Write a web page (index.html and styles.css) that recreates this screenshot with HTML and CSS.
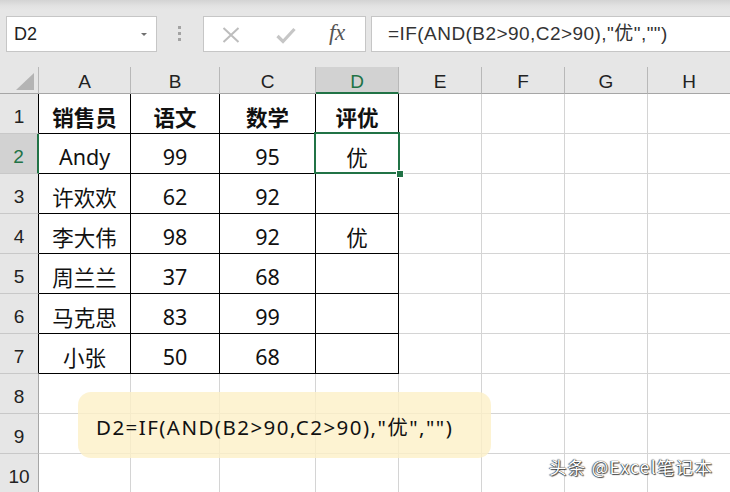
FILE: index.html
```html
<!DOCTYPE html>
<html lang="zh">
<head>
<meta charset="utf-8">
<title>Excel</title>
<link rel="stylesheet" href="styles.css">
</head>
<body>
<div class="app">
  <div class="toolbar">
    <div class="namebox">
      <span class="namebox-text">D2</span>
      <span class="namebox-arrow"></span>
    </div>
    <div class="grip"><i></i><i></i><i></i></div>
    <div class="fbtns">
      <svg class="ico-x" width="18" height="16" viewBox="0 0 18 16"><path d="M1.5 1 L16.5 15 M16.5 1 L1.5 15" stroke="#bdbdbd" stroke-width="2" fill="none"/></svg>
      <svg class="ico-check" width="20" height="17" viewBox="0 0 20 17"><path d="M1.5 9 L7 14.5 L18.5 2" stroke="#c6c6c6" stroke-width="3.2" fill="none"/></svg>
      <span class="ico-fx">fx</span>
    </div>
    <div class="formula">=IF(AND(B2&gt;90,C2&gt;90),"优","")</div>
  </div>

  <div class="sheet">
    <div class="grid">
      <div class="corner"><span class="tri"></span></div>
      <div class="ch">A</div><div class="ch">B</div><div class="ch">C</div><div class="ch sel">D</div><div class="ch">E</div><div class="ch">F</div><div class="ch">G</div><div class="ch">H</div>

      <div class="rh tb">1</div>
      <div class="c t b">销售员</div><div class="c t b">语文</div><div class="c t b">数学</div><div class="c t b">评优</div><div class="c"></div><div class="c"></div><div class="c"></div><div class="c"></div>

      <div class="rh sel">2</div>
      <div class="c t">Andy</div><div class="c t">99</div><div class="c t">95</div><div class="c t">优</div><div class="c"></div><div class="c"></div><div class="c"></div><div class="c"></div>

      <div class="rh tb">3</div>
      <div class="c t">许欢欢</div><div class="c t">62</div><div class="c t">92</div><div class="c t"></div><div class="c"></div><div class="c"></div><div class="c"></div><div class="c"></div>

      <div class="rh tb">4</div>
      <div class="c t">李大伟</div><div class="c t">98</div><div class="c t">92</div><div class="c t">优</div><div class="c"></div><div class="c"></div><div class="c"></div><div class="c"></div>

      <div class="rh tb">5</div>
      <div class="c t">周兰兰</div><div class="c t">37</div><div class="c t">68</div><div class="c t"></div><div class="c"></div><div class="c"></div><div class="c"></div><div class="c"></div>

      <div class="rh tb">6</div>
      <div class="c t">马克思</div><div class="c t">83</div><div class="c t">99</div><div class="c t"></div><div class="c"></div><div class="c"></div><div class="c"></div><div class="c"></div>

      <div class="rh tb">7</div>
      <div class="c t">小张</div><div class="c t">50</div><div class="c t">68</div><div class="c t"></div><div class="c"></div><div class="c"></div><div class="c"></div><div class="c"></div>

      <div class="rh">8</div>
      <div class="c"></div><div class="c"></div><div class="c"></div><div class="c"></div><div class="c"></div><div class="c"></div><div class="c"></div><div class="c"></div>

      <div class="rh">9</div>
      <div class="c"></div><div class="c"></div><div class="c"></div><div class="c"></div><div class="c"></div><div class="c"></div><div class="c"></div><div class="c"></div>

      <div class="rh">10</div>
      <div class="c"></div><div class="c"></div><div class="c"></div><div class="c"></div><div class="c"></div><div class="c"></div><div class="c"></div><div class="c"></div>
    </div>
    <div class="selection"><span class="handle"></span></div>
  </div>

  <div class="note">D2=IF(AND(B2&gt;90,C2&gt;90),"优","")</div>
  <div class="watermark">头条 @Excel笔记本</div>
</div>
</body>
</html>
```
FILE: styles.css
```css
html, body {
  margin: 0;
  padding: 0;
  background: #ffffff;
}

.app {
  position: relative;
  width: 730px;
  height: 492px;
  overflow: hidden;
  font-family: "Noto Sans", "Noto Sans CJK SC", sans-serif;
}

/* ---------- toolbar ---------- */
.toolbar {
  height: 67px;
  box-sizing: border-box;
  padding: 16px 0 0 6px;
  display: flex;
  align-items: flex-start;
  background: linear-gradient(#d3d3d3 0px, #e2e2e2 6px, #e6e6e6 10px, #e6e6e6 100%);
}

.namebox {
  width: 151px;
  height: 36px;
  box-sizing: border-box;
  border: 1px solid #c6c6c6;
  background: #ffffff;
  display: flex;
  align-items: center;
  justify-content: space-between;
  padding: 0 9px 0 7px;
}

.namebox-text {
  font-family: "Liberation Sans", sans-serif;
  font-size: 18px;
  color: #222222;
}

.namebox-arrow {
  width: 0;
  height: 0;
  border-left: 3px solid transparent;
  border-right: 3px solid transparent;
  border-top: 3px solid #707070;
}

.grip {
  width: 3px;
  margin: 10px 22px 0 21px;
  display: flex;
  flex-direction: column;
  gap: 3px;
}

.grip i {
  display: block;
  width: 3px;
  height: 3px;
  background: #a3a3a3;
}

.fbtns {
  width: 163px;
  height: 36px;
  box-sizing: border-box;
  border: 1px solid #c6c6c6;
  background: #ffffff;
  display: flex;
  align-items: center;
  padding-left: 18px;
}

.ico-x {
  margin-top: 2px;
}

.ico-check {
  margin-left: 36px;
  margin-top: 2px;
}

.ico-fx {
  margin-left: 33px;
  font-family: "Liberation Serif", serif;
  font-style: italic;
  font-size: 23px;
  color: #555555;
  letter-spacing: -0.5px;
  margin-top: -2px;
}

.formula {
  flex: 1;
  height: 36px;
  box-sizing: border-box;
  margin-left: 5px;
  border: 1px solid #c6c6c6;
  border-right: none;
  background: #ffffff;
  padding-left: 16px;
  font-family: "Liberation Sans", "Noto Sans CJK SC", sans-serif;
  font-size: 19px;
  letter-spacing: 0.45px;
  line-height: 33px;
  color: #333333;
  white-space: nowrap;
}

/* ---------- sheet ---------- */
.sheet {
  position: relative;
}

.grid {
  display: grid;
  grid-template-columns: 39px 92px 89px 96px 83px 83px 83px 83px 83px;
  grid-template-rows: 27px repeat(10, 40px);
}

.grid > div {
  box-sizing: border-box;
  display: flex;
  align-items: center;
  justify-content: center;
}

.corner {
  position: relative;
  background: #e6e6e6;
  border-right: 1px solid #b8b8b8;
  border-bottom: 1px solid #a6a6a6;
}

.tri {
  position: absolute;
  right: 4px;
  bottom: 3px;
  width: 0;
  height: 0;
  border-left: 18px solid transparent;
  border-bottom: 17px solid #b4b4b4;
}

.ch {
  background: #e6e6e6;
  border-right: 1px solid #b8b8b8;
  border-bottom: 1px solid #a6a6a6;
  font-family: "Liberation Sans", sans-serif;
  font-size: 19px;
  color: #222222;
  padding-top: 4px;
}

.ch.sel {
  background: #d2d2d2;
  color: #217346;
  border-bottom: 2px solid #217346;
  padding-top: 5px;
}

.rh {
  background: #e6e6e6;
  border-right: 1px solid #a6a6a6;
  border-bottom: 1px solid #c8c8c8;
  font-family: "Liberation Sans", sans-serif;
  font-size: 19px;
  color: #222222;
  padding-top: 7px;
}

.rh.tb {
  border-right-color: #000000;
}

.rh.sel {
  background: #d2d2d2;
  color: #217346;
  border-right: 2px solid #217346;
}

.c {
  border-right: 1px solid #d4d4d4;
  border-bottom: 1px solid #d4d4d4;
  font-size: 21.5px;
  color: #111111;
  padding-top: 5px;
}

.c.t {
  border-right-color: #000000;
  border-bottom-color: #000000;
}

.c.b {
  font-weight: bold;
}

.selection {
  position: absolute;
  left: 314px;
  top: 65px;
  width: 86px;
  height: 42px;
  box-sizing: border-box;
  border: 2px solid #217346;
}

.handle {
  position: absolute;
  right: -6px;
  bottom: -6px;
  width: 6px;
  height: 6px;
  background: #217346;
  border: 1px solid #ffffff;
}

/* ---------- overlays ---------- */
.note {
  position: absolute;
  left: 78px;
  top: 392px;
  width: 413px;
  height: 66px;
  box-sizing: border-box;
  border-radius: 13px;
  background: rgba(253, 240, 200, 0.82);
  padding-left: 18px;
  padding-top: 2px;
  display: flex;
  align-items: center;
  font-family: "Noto Sans", "Noto Sans CJK SC", sans-serif;
  font-size: 20.5px;
  letter-spacing: 1.45px;
  color: #111111;
  white-space: nowrap;
}

.watermark {
  position: absolute;
  left: 549px;
  top: 454px;
  font-family: "Noto Sans CJK SC", sans-serif;
  font-size: 17.5px;
  letter-spacing: 1.25px;
  color: #ffffff;
  white-space: nowrap;
  text-shadow: 0 0 1px #000, 1px 1px 1px rgba(0, 0, 0, 0.7), -1px 0 1px rgba(0, 0, 0, 0.5);
}
```
